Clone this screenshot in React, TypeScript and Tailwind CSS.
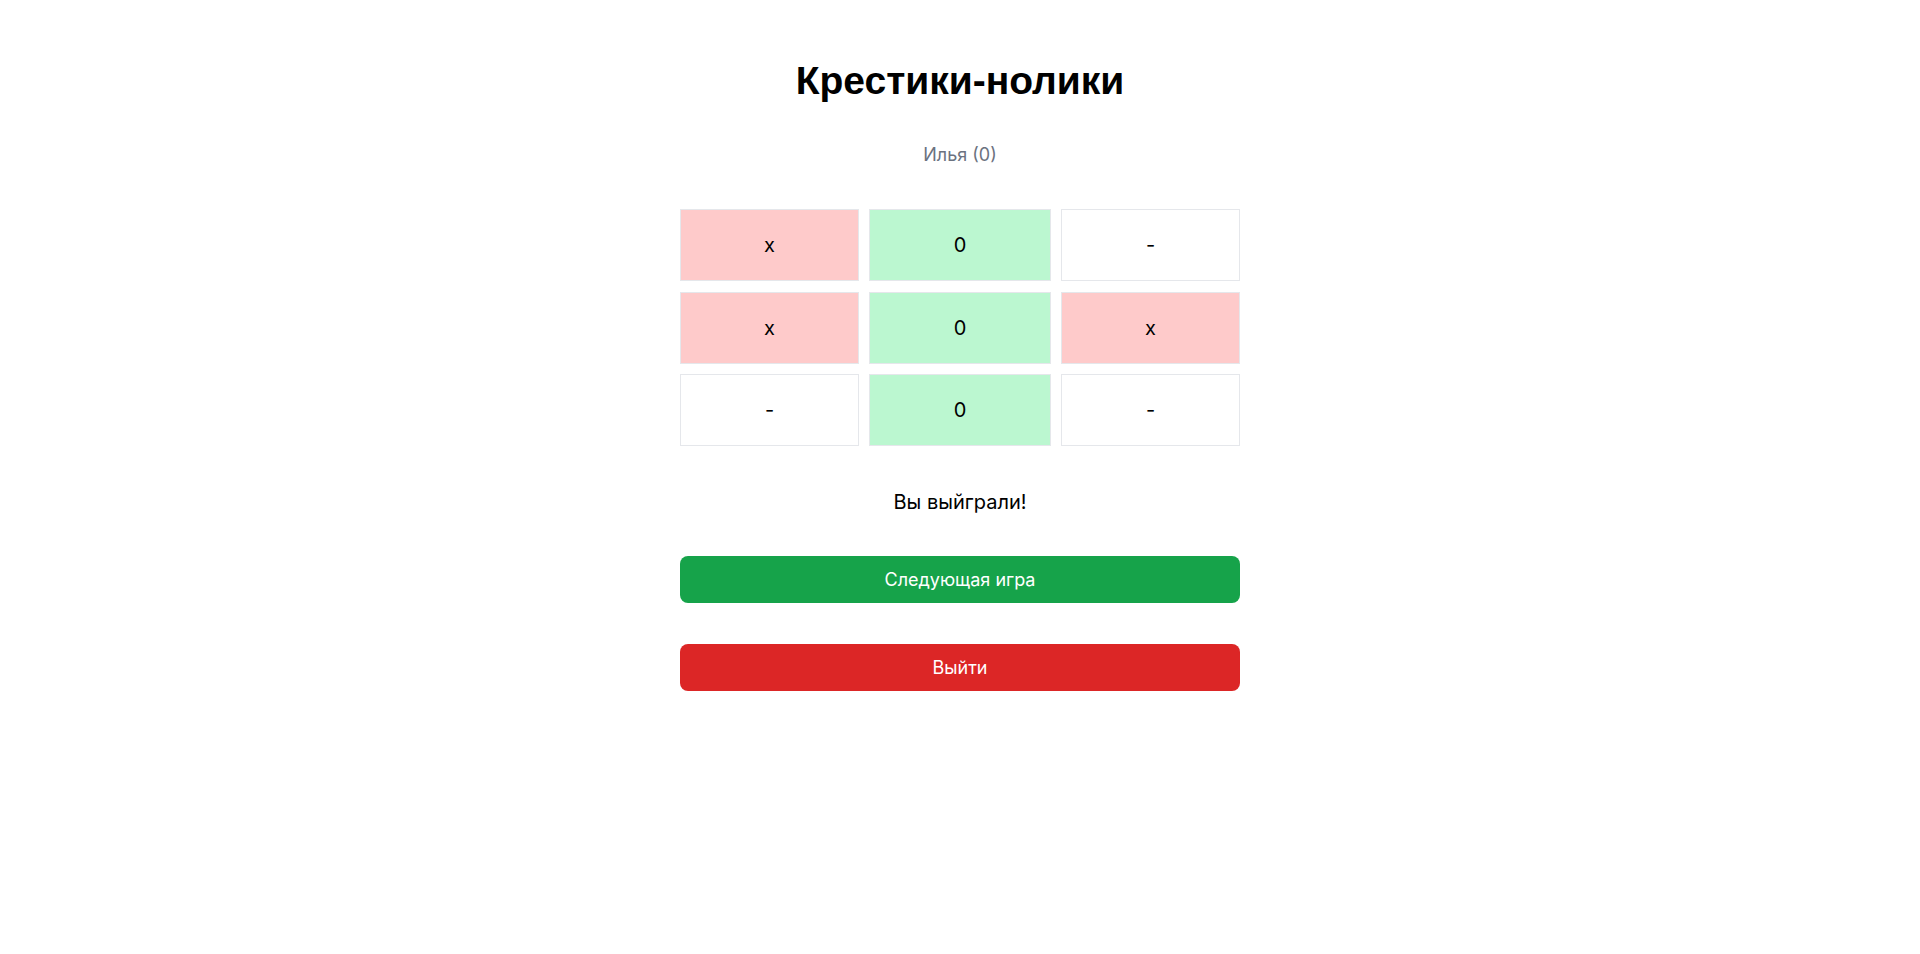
import React from "react";

type Cell = "x" | "0" | "-";

const board: Cell[] = ["x", "0", "-", "x", "0", "x", "-", "0", "-"];

function cellClass(c: Cell) {
  if (c === "x") return "bg-[#fecaca]";
  if (c === "0") return "bg-[#bbf7d0]";
  return "bg-white";
}

export default function App() {
  return (
    <div className="min-h-screen bg-white text-black" style={{ fontFamily: "Inter, 'Noto Sans', sans-serif" }}>
      <div className="mx-auto w-[560px] pt-[60px] flex flex-col items-stretch">
        <h1 className="text-center text-[39px] leading-[42px] font-bold" style={{ fontFamily: "'Liberation Sans', Arial, sans-serif" }}>
          Крестики-нолики
        </h1>
        <div className="mt-[41px] text-center text-[18px] leading-6 text-[#6b7280]">Илья (0)</div>
        <div className="mt-[42px] grid grid-cols-[179px_182px_179px] gap-x-[10px] gap-y-[10.5px]">
          {board.map((c, i) => (
            <div
              key={i}
              className={`h-[72px] flex items-center justify-center border border-[#e5e7eb] text-[20px] ${cellClass(c)}`}
            >
              {c}
            </div>
          ))}
        </div>
        <div className="mt-[42px] text-center text-[20px] leading-7">Вы выйграли!</div>
        <button className="mt-[40px] h-[47px] rounded-lg bg-[#16a34a] text-white text-[18px]">Следующая игра</button>
        <button className="mt-[41px] h-[47px] rounded-lg bg-[#dc2626] text-white text-[18px]">Выйти</button>
      </div>
    </div>
  );
}
